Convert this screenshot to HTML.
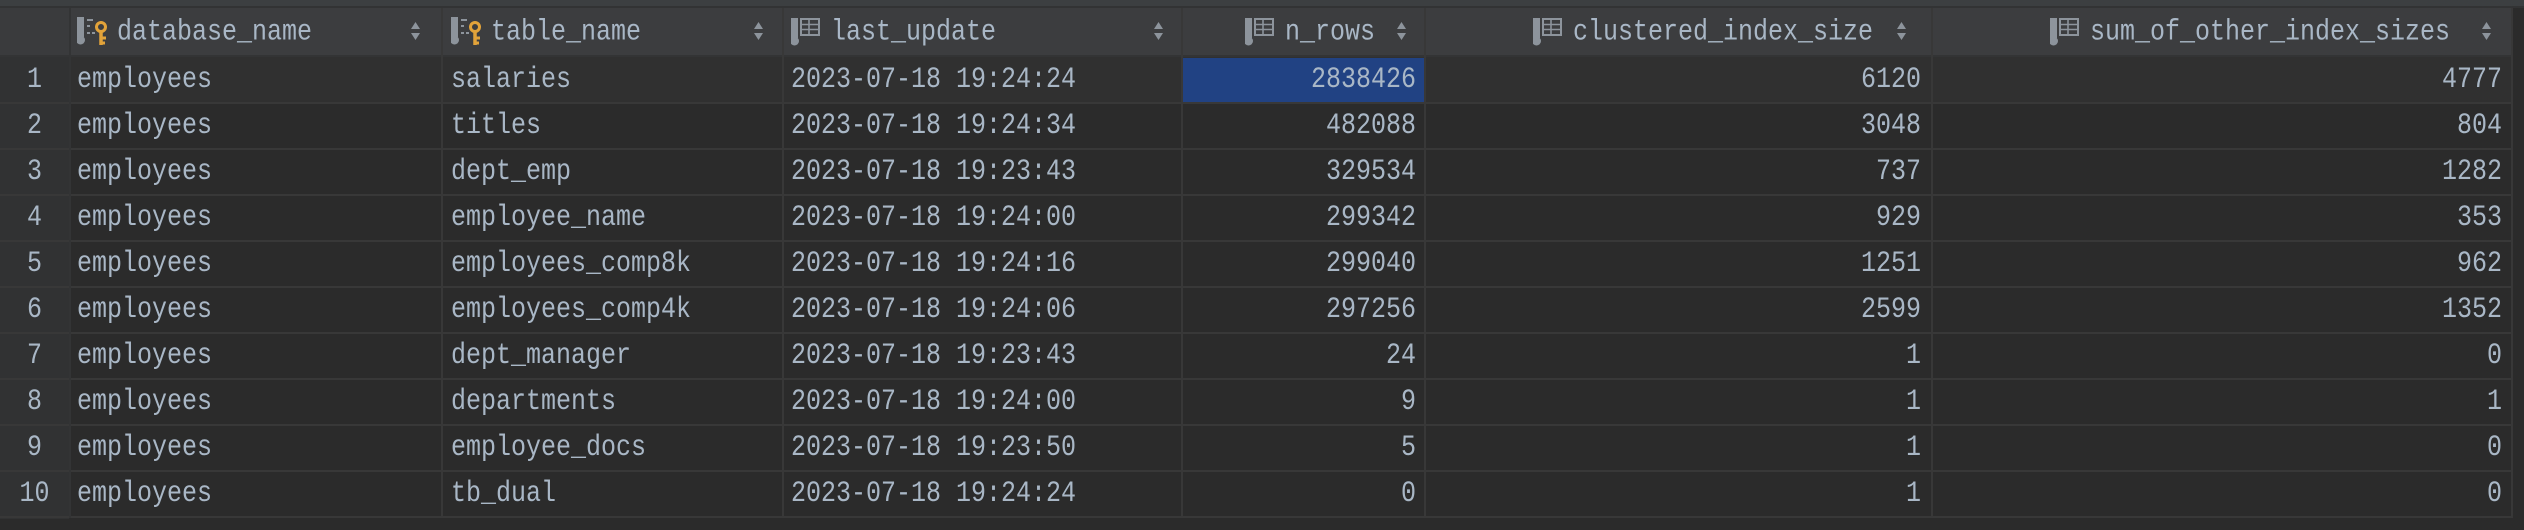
<!DOCTYPE html>
<html><head><meta charset="utf-8"><style>
*{margin:0;padding:0;box-sizing:border-box}
body{width:2524px;height:530px;background:#2b2b2b;position:relative;overflow:hidden;font-family:"Liberation Mono",monospace;color:#a9b7c6}
.top{position:absolute;left:0;top:0;width:2524px;height:8px;background:#3c3f41;border-bottom:2px solid #323334}
.hdr{position:absolute;top:8px;height:47px;background:#3c3d3f}
.line{position:absolute;background:#383838}
.c{position:absolute;height:44px;line-height:44px;font-size:25px;white-space:nowrap}
.c span,.h span.t{display:inline-block;transform:scaleY(1.2)}
.r{text-align:right}
.h{position:absolute;top:8px;height:47px;display:flex;align-items:center;font-size:25px;white-space:nowrap}
.h svg{flex:none}
.arr{position:absolute;top:13px}
</style></head><body>
<div class="top"></div>
<div class="hdr" style="left:0;width:2512px"></div>
<div class="hdr" style="left:0;width:69px;background:#3a3b3d"></div>

<!-- row highlight row1 -->
<div style="position:absolute;left:71px;top:57px;width:2440px;height:45px;background:#303030"></div>
<div style="position:absolute;left:0;top:57px;width:69px;height:462px;background:#313233"></div>
<div style="position:absolute;left:1183px;top:58px;width:241px;height:44px;background:#214283"></div>

<!-- horizontal lines -->
<div class="line" style="left:0;top:55px;width:2513px;height:2px;background:#333435"></div>
<div id="hl"></div>
<script></script>
<div class="line" style="left:0;top:102px;width:2513px;height:2px"></div>
<div class="line" style="left:0;top:148px;width:2513px;height:2px"></div>
<div class="line" style="left:0;top:194px;width:2513px;height:2px"></div>
<div class="line" style="left:0;top:240px;width:2513px;height:2px"></div>
<div class="line" style="left:0;top:286px;width:2513px;height:2px"></div>
<div class="line" style="left:0;top:332px;width:2513px;height:2px"></div>
<div class="line" style="left:0;top:378px;width:2513px;height:2px"></div>
<div class="line" style="left:0;top:424px;width:2513px;height:2px"></div>
<div class="line" style="left:0;top:470px;width:2513px;height:2px"></div>
<div class="line" style="left:0;top:516px;width:2513px;height:2px"></div>
<!-- vertical lines -->
<div class="line" style="left:69px;top:8px;width:2px;height:510px;background:#333435"></div>
<div class="line" style="left:441px;top:8px;width:2px;height:510px"></div>
<div class="line" style="left:782px;top:8px;width:2px;height:510px"></div>
<div class="line" style="left:1181px;top:8px;width:2px;height:510px"></div>
<div class="line" style="left:1424px;top:8px;width:2px;height:510px"></div>
<div class="line" style="left:1931px;top:8px;width:2px;height:510px"></div>
<div class="line" style="left:2511px;top:8px;width:2px;height:510px"></div>

<!-- header -->
<svg width="0" height="0" style="position:absolute">
<defs>
<g id="tbl"><rect x="0" y="0" width="7" height="20" fill="#8d949c"/><circle cx="3.5" cy="23" r="4.5" fill="#8d949c"/><rect x="10" y="1" width="18" height="16" fill="none" stroke="#8d949c" stroke-width="2"/><line x1="10" y1="6.5" x2="28" y2="6.5" stroke="#8d949c" stroke-width="1.6"/><line x1="10" y1="11.5" x2="28" y2="11.5" stroke="#8d949c" stroke-width="1.6"/><line x1="18" y1="1" x2="18" y2="17" stroke="#8d949c" stroke-width="1.6"/></g>
<g id="key"><rect x="0" y="0" width="7" height="20" fill="#8d949c"/><circle cx="3.5" cy="23" r="4.5" fill="#8d949c"/><line x1="10" y1="3" x2="16" y2="3" stroke="#8d949c" stroke-width="2"/><line x1="10" y1="9" x2="15" y2="9" stroke="#8d949c" stroke-width="2" stroke-dasharray="3 2"/><line x1="10" y1="16" x2="18" y2="16" stroke="#8d949c" stroke-width="2" stroke-dasharray="3 2"/><circle cx="24" cy="10" r="4.5" fill="none" stroke="#e2a33a" stroke-width="3"/><line x1="24" y1="14" x2="24" y2="28" stroke="#e2a33a" stroke-width="3.5"/><line x1="24" y1="21" x2="29" y2="21" stroke="#e2a33a" stroke-width="3"/><line x1="24" y1="26" x2="28" y2="26" stroke="#e2a33a" stroke-width="3"/></g>
<g id="ar"><path d="M0 7 L4.5 0 L9 7Z M0 11 L4.5 18 L9 11Z" fill="#8d949c"/></g>
</defs></svg>

<div class="h" style="left:77px"><svg width="32" height="30"><use href="#key"/></svg><span class="t" style="margin-left:8px">database_name</span></div>
<svg class="arr" style="left:411px;top:22px" width="10" height="18"><use href="#ar"/></svg>
<div class="h" style="left:451px"><svg width="32" height="30"><use href="#key"/></svg><span class="t" style="margin-left:8px">table_name</span></div>
<svg class="arr" style="left:754px;top:22px" width="10" height="18"><use href="#ar"/></svg>
<div class="h" style="left:791px"><svg width="32" height="30" style="margin-top:2px"><use href="#tbl"/></svg><span class="t" style="margin-left:8px">last_update</span></div>
<svg class="arr" style="left:1154px;top:22px" width="10" height="18"><use href="#ar"/></svg>
<div class="h" style="left:1245px"><svg width="32" height="30" style="margin-top:2px"><use href="#tbl"/></svg><span class="t" style="margin-left:8px">n_rows</span></div>
<svg class="arr" style="left:1397px;top:22px" width="10" height="18"><use href="#ar"/></svg>
<div class="h" style="left:1533px"><svg width="32" height="30" style="margin-top:2px"><use href="#tbl"/></svg><span class="t" style="margin-left:8px">clustered_index_size</span></div>
<svg class="arr" style="left:1897px;top:22px" width="10" height="18"><use href="#ar"/></svg>
<div class="h" style="left:2050px"><svg width="32" height="30" style="margin-top:2px"><use href="#tbl"/></svg><span class="t" style="margin-left:8px">sum_of_other_index_sizes</span></div>
<svg class="arr" style="left:2482px;top:22px" width="10" height="18"><use href="#ar"/></svg>

<!-- rows -->
<div style="position:absolute;left:0;top:58px">
<div style="position:relative">
<div class="c" style="left:0;width:69px;text-align:center;top:0"><span>1</span></div>
<div class="c" style="left:77px;top:0"><span>employees</span></div>
<div class="c" style="left:451px;top:0"><span>salaries</span></div>
<div class="c" style="left:791px;top:0"><span>2023-07-18 19:24:24</span></div>
<div class="c r" style="left:1183px;width:233px;top:0"><span>2838426</span></div>
<div class="c r" style="left:1426px;width:495px;top:0"><span>6120</span></div>
<div class="c r" style="left:1933px;width:569px;top:0"><span>4777</span></div>

<div class="c" style="left:0;width:69px;text-align:center;top:46px"><span>2</span></div>
<div class="c" style="left:77px;top:46px"><span>employees</span></div>
<div class="c" style="left:451px;top:46px"><span>titles</span></div>
<div class="c" style="left:791px;top:46px"><span>2023-07-18 19:24:34</span></div>
<div class="c r" style="left:1183px;width:233px;top:46px"><span>482088</span></div>
<div class="c r" style="left:1426px;width:495px;top:46px"><span>3048</span></div>
<div class="c r" style="left:1933px;width:569px;top:46px"><span>804</span></div>

<div class="c" style="left:0;width:69px;text-align:center;top:92px"><span>3</span></div>
<div class="c" style="left:77px;top:92px"><span>employees</span></div>
<div class="c" style="left:451px;top:92px"><span>dept_emp</span></div>
<div class="c" style="left:791px;top:92px"><span>2023-07-18 19:23:43</span></div>
<div class="c r" style="left:1183px;width:233px;top:92px"><span>329534</span></div>
<div class="c r" style="left:1426px;width:495px;top:92px"><span>737</span></div>
<div class="c r" style="left:1933px;width:569px;top:92px"><span>1282</span></div>

<div class="c" style="left:0;width:69px;text-align:center;top:138px"><span>4</span></div>
<div class="c" style="left:77px;top:138px"><span>employees</span></div>
<div class="c" style="left:451px;top:138px"><span>employee_name</span></div>
<div class="c" style="left:791px;top:138px"><span>2023-07-18 19:24:00</span></div>
<div class="c r" style="left:1183px;width:233px;top:138px"><span>299342</span></div>
<div class="c r" style="left:1426px;width:495px;top:138px"><span>929</span></div>
<div class="c r" style="left:1933px;width:569px;top:138px"><span>353</span></div>

<div class="c" style="left:0;width:69px;text-align:center;top:184px"><span>5</span></div>
<div class="c" style="left:77px;top:184px"><span>employees</span></div>
<div class="c" style="left:451px;top:184px"><span>employees_comp8k</span></div>
<div class="c" style="left:791px;top:184px"><span>2023-07-18 19:24:16</span></div>
<div class="c r" style="left:1183px;width:233px;top:184px"><span>299040</span></div>
<div class="c r" style="left:1426px;width:495px;top:184px"><span>1251</span></div>
<div class="c r" style="left:1933px;width:569px;top:184px"><span>962</span></div>

<div class="c" style="left:0;width:69px;text-align:center;top:230px"><span>6</span></div>
<div class="c" style="left:77px;top:230px"><span>employees</span></div>
<div class="c" style="left:451px;top:230px"><span>employees_comp4k</span></div>
<div class="c" style="left:791px;top:230px"><span>2023-07-18 19:24:06</span></div>
<div class="c r" style="left:1183px;width:233px;top:230px"><span>297256</span></div>
<div class="c r" style="left:1426px;width:495px;top:230px"><span>2599</span></div>
<div class="c r" style="left:1933px;width:569px;top:230px"><span>1352</span></div>

<div class="c" style="left:0;width:69px;text-align:center;top:276px"><span>7</span></div>
<div class="c" style="left:77px;top:276px"><span>employees</span></div>
<div class="c" style="left:451px;top:276px"><span>dept_manager</span></div>
<div class="c" style="left:791px;top:276px"><span>2023-07-18 19:23:43</span></div>
<div class="c r" style="left:1183px;width:233px;top:276px"><span>24</span></div>
<div class="c r" style="left:1426px;width:495px;top:276px"><span>1</span></div>
<div class="c r" style="left:1933px;width:569px;top:276px"><span>0</span></div>

<div class="c" style="left:0;width:69px;text-align:center;top:322px"><span>8</span></div>
<div class="c" style="left:77px;top:322px"><span>employees</span></div>
<div class="c" style="left:451px;top:322px"><span>departments</span></div>
<div class="c" style="left:791px;top:322px"><span>2023-07-18 19:24:00</span></div>
<div class="c r" style="left:1183px;width:233px;top:322px"><span>9</span></div>
<div class="c r" style="left:1426px;width:495px;top:322px"><span>1</span></div>
<div class="c r" style="left:1933px;width:569px;top:322px"><span>1</span></div>

<div class="c" style="left:0;width:69px;text-align:center;top:368px"><span>9</span></div>
<div class="c" style="left:77px;top:368px"><span>employees</span></div>
<div class="c" style="left:451px;top:368px"><span>employee_docs</span></div>
<div class="c" style="left:791px;top:368px"><span>2023-07-18 19:23:50</span></div>
<div class="c r" style="left:1183px;width:233px;top:368px"><span>5</span></div>
<div class="c r" style="left:1426px;width:495px;top:368px"><span>1</span></div>
<div class="c r" style="left:1933px;width:569px;top:368px"><span>0</span></div>

<div class="c" style="left:0;width:69px;text-align:center;top:414px"><span>10</span></div>
<div class="c" style="left:77px;top:414px"><span>employees</span></div>
<div class="c" style="left:451px;top:414px"><span>tb_dual</span></div>
<div class="c" style="left:791px;top:414px"><span>2023-07-18 19:24:24</span></div>
<div class="c r" style="left:1183px;width:233px;top:414px"><span>0</span></div>
<div class="c r" style="left:1426px;width:495px;top:414px"><span>1</span></div>
<div class="c r" style="left:1933px;width:569px;top:414px"><span>0</span></div>
</div></div>
</body></html>
